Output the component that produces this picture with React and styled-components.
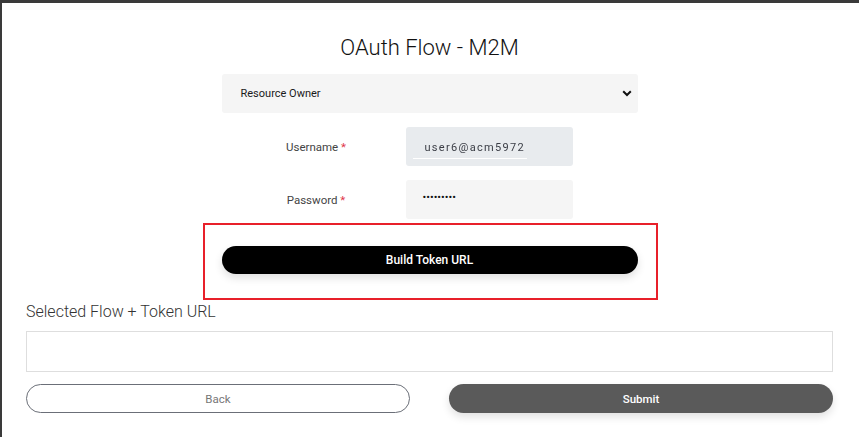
import React from "react";
import styled, { createGlobalStyle } from "styled-components";

const Global = createGlobalStyle`
  html, body { margin: 0; padding: 0; background: #fff; }
  body { font-family: Roboto, "Noto Sans", Arial, sans-serif; }
  * { box-sizing: border-box; }
`;

const Page = styled.div`
  width: 859px;
  height: 437px;
  border-top: 3px solid #3a3a3a;
  border-left: 2px solid #3a3a3a;
  padding: 0 26px 0 24px;
  overflow: hidden;
`;

const Title = styled.h1`
  margin: 31px 0 0;
  height: 40px;
  font-family: Roboto, sans-serif;
  font-weight: 300;
  font-size: 22px;
  line-height: 28px;
  color: #111;
  text-align: center;
`;

const Form = styled.div`
  width: 416px;
  margin: 0 auto;
  display: flex;
  flex-direction: column;
`;

const SelectBox = styled.div`
  height: 39px;
  background: #f5f5f5;
  border-radius: 3px;
  display: flex;
  align-items: center;
  justify-content: space-between;
  padding: 0 6px 0 19px;
  font-size: 11px;
  color: #1a1a1a;
`;

const FieldRow = styled.div`
  display: grid;
  grid-template-columns: 184px 167px;
  align-items: center;
  margin-top: 14px;
`;

const Label = styled.label`
  font-size: 11.5px;
  color: #444;
  text-align: center;
  padding-left: 5px;
`;

const Req = styled.span`
  color: #e0344a;
`;

const Input = styled.div`
  height: 39px;
  border-radius: 3px;
  background: ${(p) => (p.$filled ? "#e8ebee" : "#f5f5f5")};
  display: flex;
  align-items: center;
  padding-left: ${(p) => p.$pad}px;
  font-size: 11px;
  color: #333;
`;

const AutoText = styled.span`
  display: inline-block;
  width: 114px;
  padding: 0 0 4px 12px;
  margin-top: 7px;
  border-bottom: 1px solid #fff;
  letter-spacing: 1.3px;
  color: #3a3d45;
  filter: blur(0.3px);
`;

const Dots = styled.span`
  font-size: 11px;
  letter-spacing: 0px;
  color: #111;
  margin-top: -4px;
`;

const ButtonZone = styled.div`
  position: relative;
  margin-top: 27px;
`;

const Annotation = styled.div`
  position: absolute;
  left: -19px;
  right: -20px;
  top: -23px;
  bottom: -26px;
  border: 2px solid #e8202a;
  pointer-events: none;
`;

const PillButton = styled.button`
  width: 100%;
  height: ${(p) => p.$h}px;
  border-radius: 16px;
  font-family: Roboto, sans-serif;
  font-size: ${(p) => (p.$variant === "dark" ? 12 : 11.5)}px;
  font-weight: ${(p) => (p.$variant === "outline" ? 400 : 500)};
  cursor: pointer;
  background: ${(p) =>
    p.$variant === "dark" ? "#000" : p.$variant === "gray" ? "#5a5a5a" : "#fff"};
  color: ${(p) => (p.$variant === "outline" ? "#777" : "#fff")};
  border: ${(p) => (p.$variant === "outline" ? "1px solid #6b6f78" : "none")};
  box-shadow: ${(p) =>
    p.$variant === "outline" ? "none" : "0 4px 8px rgba(0,0,0,0.12)"};
`;

const Section = styled.div`
  margin-top: 29px;
`;

const SectionTitle = styled.div`
  font-size: 16px;
  font-weight: 300;
  color: #333;
  line-height: 18px;
`;

const OutputBox = styled.div`
  margin-top: 10px;
  height: 41px;
  border: 1px solid #dedede;
`;

const Actions = styled.div`
  display: grid;
  grid-template-columns: 1fr 1fr;
  gap: 39px;
  margin-top: 12px;
`;

function Chevron() {
  return (
    <svg width="10" height="7" viewBox="0 0 10 7">
      <polyline
        points="1.2,1.2 5,5 8.8,1.2"
        fill="none"
        stroke="#111"
        strokeWidth="2"
      />
    </svg>
  );
}

export default function App() {
  return (
    <>
      <Global />
      <Page>
        <Title>OAuth Flow - M2M</Title>
        <Form>
          <SelectBox>
            <span>Resource Owner</span>
            <Chevron />
          </SelectBox>
          <FieldRow>
            <Label>
              Username <Req>*</Req>
            </Label>
            <Input $filled $pad={7}>
              <AutoText>user6@acm5972</AutoText>
            </Input>
          </FieldRow>
          <FieldRow>
            <Label>
              Password <Req>*</Req>
            </Label>
            <Input $pad={17}>
              <Dots>•••••••••</Dots>
            </Input>
          </FieldRow>
          <ButtonZone>
            <PillButton $variant="dark" $h={28}>
              Build Token URL
            </PillButton>
            <Annotation />
          </ButtonZone>
        </Form>
        <Section>
          <SectionTitle>Selected Flow + Token URL</SectionTitle>
          <OutputBox />
          <Actions>
            <PillButton $variant="outline" $h={29}>
              Back
            </PillButton>
            <PillButton $variant="gray" $h={29}>
              Submit
            </PillButton>
          </Actions>
        </Section>
      </Page>
    </>
  );
}
